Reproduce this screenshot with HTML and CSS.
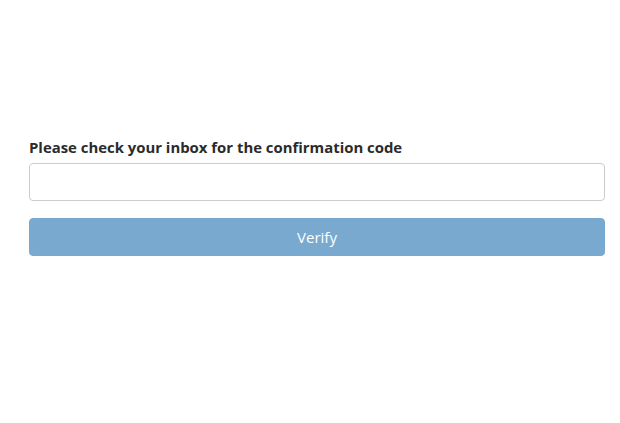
FILE: index.html
```html
<!DOCTYPE html>
<html>
<head>
<meta charset="utf-8">
<link rel="stylesheet" href="styles.css">
</head>
<body>
<div class="page">
  <form class="form">
    <label class="label" for="code">Please check your inbox for the confirmation code</label>
    <input class="input" id="code" type="text">
    <button class="btn" type="button" disabled>Verify</button>
  </form>
</div>
</body>
</html>
```

FILE: styles.css
```css
html, body {
  margin: 0;
  padding: 0;
  background: #fff;
}
.page {
  padding: 137px 15px 0 29px;
  font-family: "Open Sans", "Noto Sans", sans-serif;
  color: #2b2b2b;
}
.form {
  display: flex;
  flex-direction: column;
  width: 576px;
}
.label {
  font-weight: 700;
  font-size: 14.9px;
  line-height: 20px;
  margin-bottom: 6px;
}
.input {
  box-sizing: border-box;
  height: 38px;
  border: 1px solid #cccccc;
  border-radius: 4px;
  margin: 0 0 17px;
  padding: 6px 12px;
  font-size: 16px;
}
.btn {
  box-sizing: border-box;
  height: 38px;
  border: 1px solid #7aa9d0;
  border-radius: 4px;
  background: #7aa9d0;
  color: #fff;
  font-family: "Open Sans", sans-serif;
  font-size: 15px;
  padding: 0;
}
```
